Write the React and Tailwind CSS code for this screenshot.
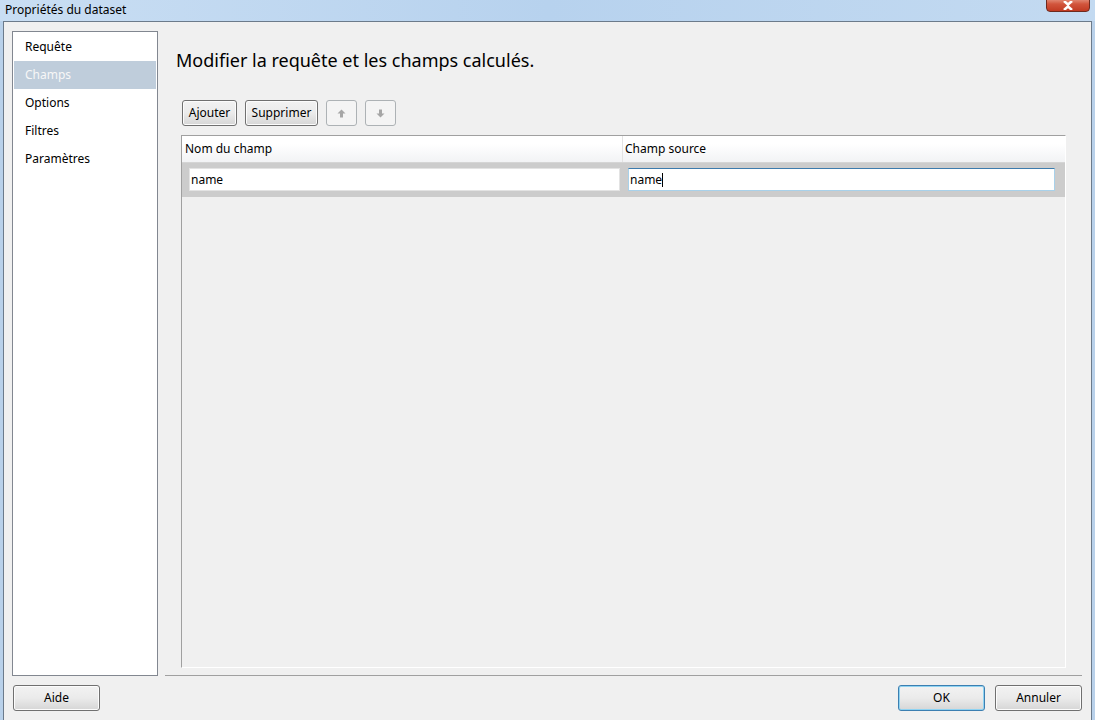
const font = { fontFamily: '"Segoe UI", "Noto Sans", "Open Sans", sans-serif' };

function ArrowIcon({ down }) {
  return (
    <svg width="9" height="9" viewBox="0 0 9 9" className={down ? "rotate-180" : ""}>
      <path d="M4.5 0.5 L8.5 4.5 L6 4.5 L6 8.5 L3 8.5 L3 4.5 L0.5 4.5 Z" fill="#a6a6a6" />
    </svg>
  );
}

function Button({ children, className = "", focused = false }) {
  return (
    <button
      className={`h-[26px] rounded-[3px] border text-[12px] text-black flex items-center justify-center bg-gradient-to-b from-[#f2f2f2] via-[#ebebeb] to-[#d6d6d6] ${
        focused ? "border-[#3c7fb1] shadow-[inset_0_0_0_1px_#8fd3f2]" : "border-[#707070] shadow-[inset_0_0_0_1px_#fcfcfc]"
      } ${className}`}
    >
      {children}
    </button>
  );
}

function IconButton({ down }) {
  return (
    <button className="w-[31px] h-[26px] rounded-[3px] border border-[#adb2b5] bg-[#f4f4f4] flex items-center justify-center">
      <ArrowIcon down={down} />
    </button>
  );
}

const items = ["Requête", "Champs", "Options", "Filtres", "Paramètres"];

export default function App() {
  return (
    <div className="w-[1095px] h-[720px] relative overflow-hidden bg-[#b9d1ea] flex flex-col" style={font}>
      <div className="h-[21px] shrink-0 bg-gradient-to-r from-[#c9def3] via-[#b7d2ee] to-[#c3daf1] text-[12px] text-black pl-[5px] leading-[20px]">
        Propriétés du dataset
      </div>
      <div className="absolute right-[5px] top-[-4px] w-[44px] h-[16px] rounded-b-[4px] border border-[#6e2a1f] bg-gradient-to-b from-[#e8a493] via-[#d2553c] to-[#c13a22] flex items-end justify-center pb-[1px]">
        <svg width="12" height="9" viewBox="0 0 12 9">
          <path d="M2 0 L6 3.5 L10 0 M2 9 L6 5.5 L10 9" stroke="white" strokeWidth="2.5" fill="none" />
        </svg>
      </div>

      <div className="flex-1 ml-[3px] mr-[3px] border border-[#6c7b8b] border-b-0 bg-[#f0f0f0] flex flex-col pl-[8px] pt-[9px] pr-[9px]">
        <div className="flex h-[645px]">
          <div className="w-[146px] h-full border border-[#828790] bg-white pt-px px-px">
            {items.map((it) => (
              <div
                key={it}
                className={`h-[28px] pl-[11px] text-[12px] leading-[28px] ${
                  it === "Champs" ? "bg-[#bfcddb] text-[#f7f7f7]" : "text-black"
                }`}
              >
                {it}
              </div>
            ))}
          </div>

          <div className="flex-1 ml-[7px] border-b border-[#a0a0a0] flex flex-col pr-[16px]">
            <div className="pl-[11px] pt-[14px] h-[69px] text-[18px] text-black leading-[30px]">
              Modifier la requête et les champs calculés.
            </div>
            <div className="flex gap-[8px] pl-[17px] h-[35px]">
              <Button className="w-[55px]">Ajouter</Button>
              <Button className="w-[73px]">Supprimer</Button>
              <IconButton />
              <IconButton down />
            </div>

            <div className="ml-[16px] h-[533px] border-t border-l border-[#a0a0a0] border-r border-r-white border-b border-b-white flex flex-col">
              <div className="h-[27px] flex bg-gradient-to-b from-white from-30% to-[#f2f3f5] border-b border-[#d5d5d5] text-[12px] text-black">
                <div className="w-[441px] border-r border-[#e3e3e3] pl-[3px] leading-[26px]">Nom du champ</div>
                <div className="flex-1 pl-[2px] leading-[26px]">Champ source</div>
              </div>
              <div className="h-[34px] flex bg-[#cccccc] items-start pt-[5px]">
                <div className="w-[441px] pl-[7px] pr-[3px]">
                  <div className="h-[23px] bg-white border border-[#e3e3e3] text-[12px] leading-[21px] pl-[1px] text-black">
                    name
                  </div>
                </div>
                <div className="flex-1 pl-[5px] pr-[10px]">
                  <div className="h-[23px] bg-white border border-[#a8d1ea] border-t-[#3d7bad] text-[12px] leading-[21px] pl-[1px] text-black flex items-center">
                    <span>name</span>
                    <span className="w-px h-[14px] bg-black" />
                  </div>
                </div>
              </div>
              <div className="flex-1 bg-[#f0f0f0]" />
            </div>
          </div>
        </div>

        <div className="flex items-center pt-[9px]">
          <Button className="w-[87px] ml-[1px]">Aide</Button>
          <div className="flex-1" />
          <Button className="w-[87px]" focused>OK</Button>
          <Button className="w-[87px] ml-[10px]">Annuler</Button>
        </div>
      </div>
    </div>
  );
}
